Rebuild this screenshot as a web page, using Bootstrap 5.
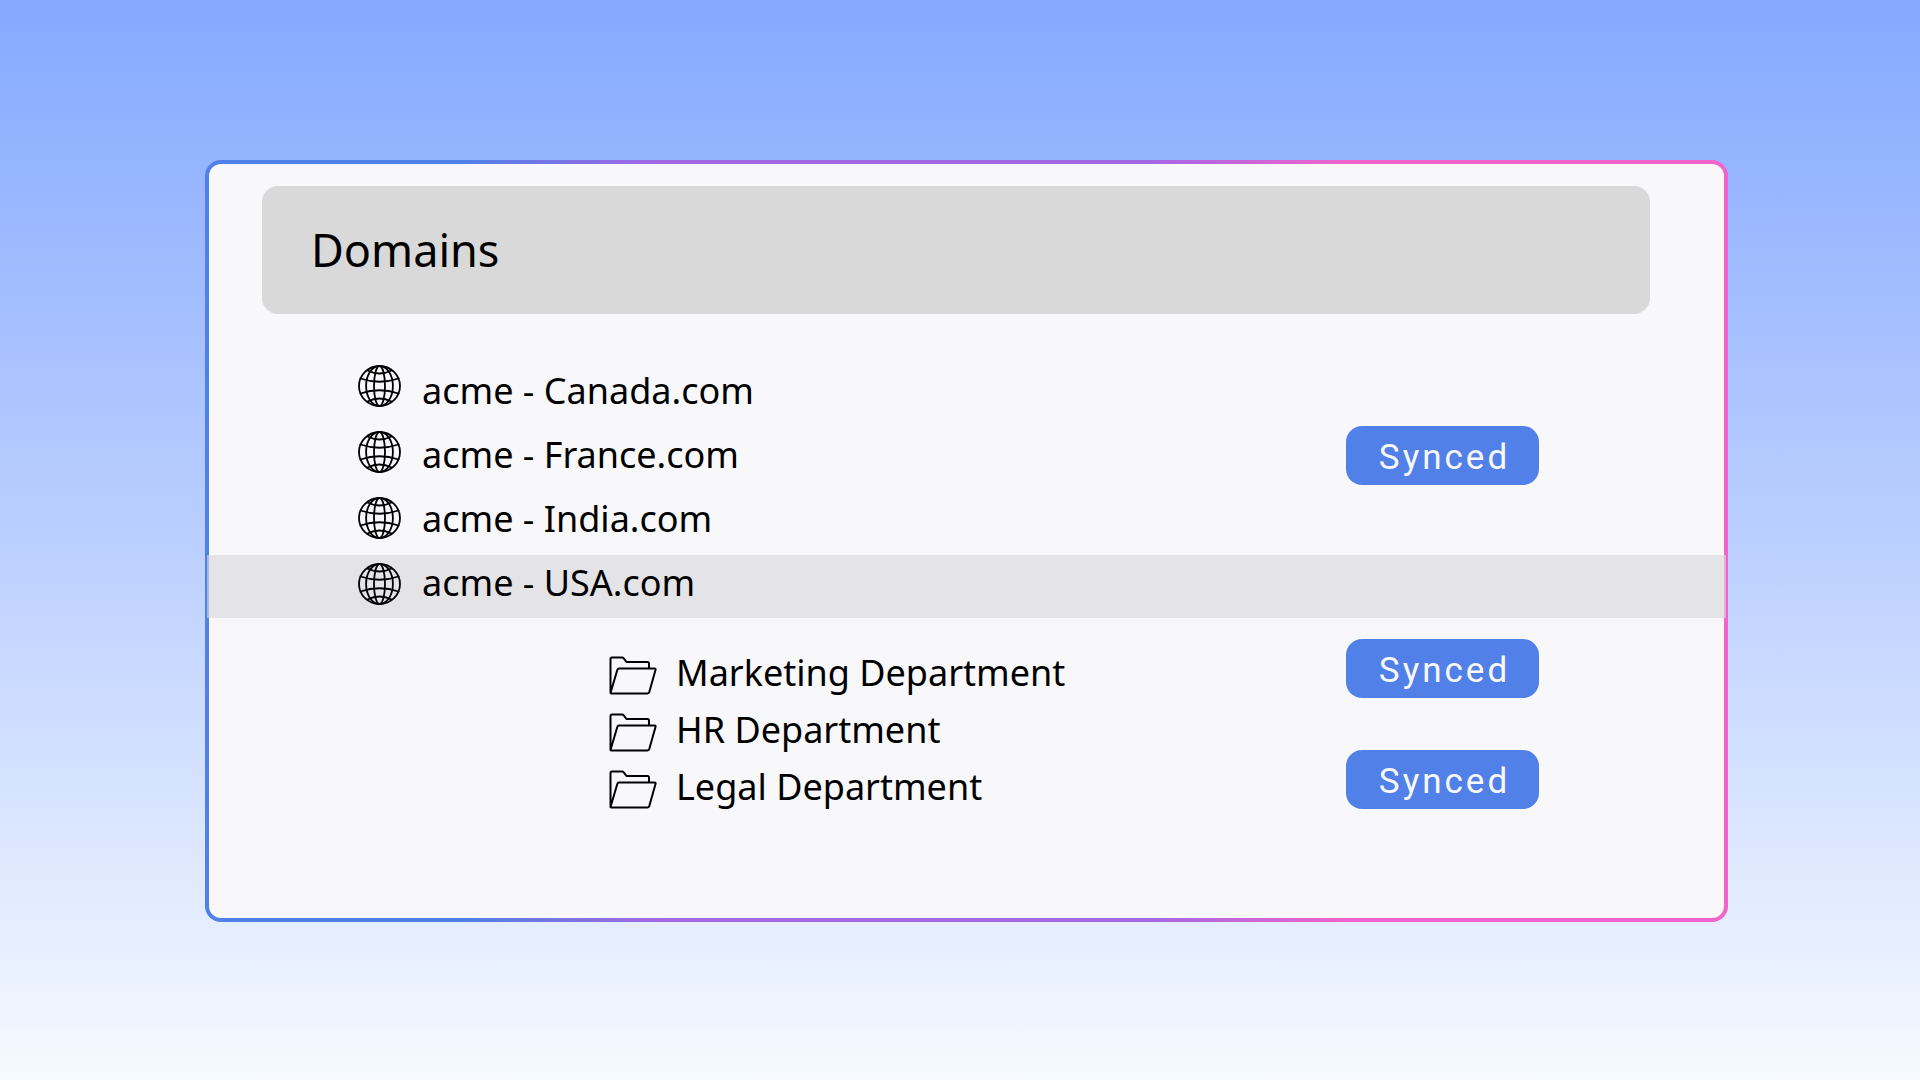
<!DOCTYPE html>
<html lang="en">
<head>
<meta charset="utf-8">
<meta name="viewport" content="width=device-width, initial-scale=1">
<title>Domains</title>
<link href="https://cdn.jsdelivr.net/npm/bootstrap@5.3.0/dist/css/bootstrap.min.css" rel="stylesheet">
<style>
  body {
    font-family: "Noto Sans", "Open Sans", sans-serif;
    color: #000;
    background: linear-gradient(180deg, #85a9ff 0%, #bbcfff 50%, #f6faff 100%) no-repeat;
    padding: 160px 192px 158px 205px;
  }
  .panel {
    border: 4px solid transparent;
    border-radius: 16px;
    background:
      linear-gradient(#f8f8fb, #f8f8fb) padding-box,
      linear-gradient(90deg, #5180e8 17%, #a468e4 30%, #a468e4 62%, #f164cb 75%) border-box;
    padding: 22px 0 103px;
  }
  .panel-head { background: #d9d9d9; border-radius: 16px; margin: 0 74px 0 53px; padding: 0 49px; }
  .panel-head h1 { font-size: 45px; line-height: 128px; font-weight: 400; }
  .domains { padding-left: 149px; padding-top: 43px; gap: 21px; }
  .globes { gap: 24px; padding-top: 8px; }
  .domains ul { font-size: 36px; line-height: 64px; padding-top: 2px; }
  .departments { padding: 29px 0 0 400px; }
  .departments li { font-size: 36px; line-height: 57px; gap: 19px; }
  .departments svg { margin-top: 6px; }
  .states { padding: 112px 185px 0 0; }
  .states .pill + .pill { margin-top: 154px; }
  .states .pill + .pill + .pill { margin-top: 52px; }
  .pill {
    font-family: Roboto, sans-serif; font-size: 35px; line-height: 55px; letter-spacing: 3px;
    color: #f8f8fb; background: #5180e8; border-radius: 16px; width: 193px; padding: 4px 0 0 4px;
  }
  .band { left: -2px; right: -2px; top: 391px; height: 63px; background: rgba(217, 217, 219, .65); }
  svg { fill: none; stroke: #000; stroke-linecap: round; stroke-linejoin: round; display: block; }
</style>
</head>
<body class="min-vh-100">
<svg width="0" height="0" class="position-absolute" aria-hidden="true">
  <symbol id="globe" viewBox="0 0 43 42">
    <g stroke-width="1.8">
      <ellipse cx="21.5" cy="21" rx="20.5" ry="20"/>
      <ellipse cx="21.5" cy="21" rx="5.5" ry="20"/>
      <ellipse cx="21.5" cy="21" rx="13.4" ry="20"/>
      <path d="M9.500 5.500Q21.500 11.500 33.500 5.500M2.500 13.500Q21.500 20 40.500 13.500M2.500 28.500Q21.500 22 40.500 28.500M9.500 36.500Q21.500 30.500 33.500 36.500"/>
    </g>
  </symbol>
  <symbol id="folder" viewBox="0 0 48 39">
    <path stroke-width="2" d="M1.500 36V3Q1.500 1.500 3 1.500H13Q14 1.500 14.700 2.300L17.500 6H38.500Q40 6 40 7.500V12.500M1.500 37L8.300 14Q8.700 12.600 10 12.600H45.500Q47 12.600 46.500 14L40.300 36Q39.900 37.400 38.500 37.400H2.500Q1.200 37.400 1.500 36Z"/>
  </symbol>
</svg>

<main class="panel position-relative">
  <header class="panel-head"><h1 class="m-0">Domains</h1></header>
  <div class="band position-absolute"></div>
  <div class="d-flex justify-content-between position-relative">
    <div>
      <section class="domains d-flex">
        <div class="globes d-flex flex-column" aria-hidden="true">
          <svg width="43" height="42"><use href="#globe"/></svg>
          <svg width="43" height="42"><use href="#globe"/></svg>
          <svg width="43" height="42"><use href="#globe"/></svg>
          <svg width="43" height="42"><use href="#globe"/></svg>
        </div>
        <ul class="list-unstyled m-0">
          <li>acme - Canada.com</li>
          <li>acme - France.com</li>
          <li>acme - India.com</li>
          <li>acme - USA.com</li>
        </ul>
      </section>
      <ul class="departments list-unstyled m-0">
        <li class="d-flex align-items-center"><svg width="48" height="39" aria-hidden="true"><use href="#folder"/></svg>Marketing Department</li>
        <li class="d-flex align-items-center"><svg width="48" height="39" aria-hidden="true"><use href="#folder"/></svg>HR Department</li>
        <li class="d-flex align-items-center"><svg width="48" height="39" aria-hidden="true"><use href="#folder"/></svg>Legal Department</li>
      </ul>
    </div>
    <div class="states d-flex flex-column text-center">
      <div class="pill">Synced</div>
      <div class="pill">Synced</div>
      <div class="pill">Synced</div>
    </div>
  </div>
</main>
<script src="https://cdn.jsdelivr.net/npm/bootstrap@5.3.0/dist/js/bootstrap.bundle.min.js"></script>
</body>
</html>
